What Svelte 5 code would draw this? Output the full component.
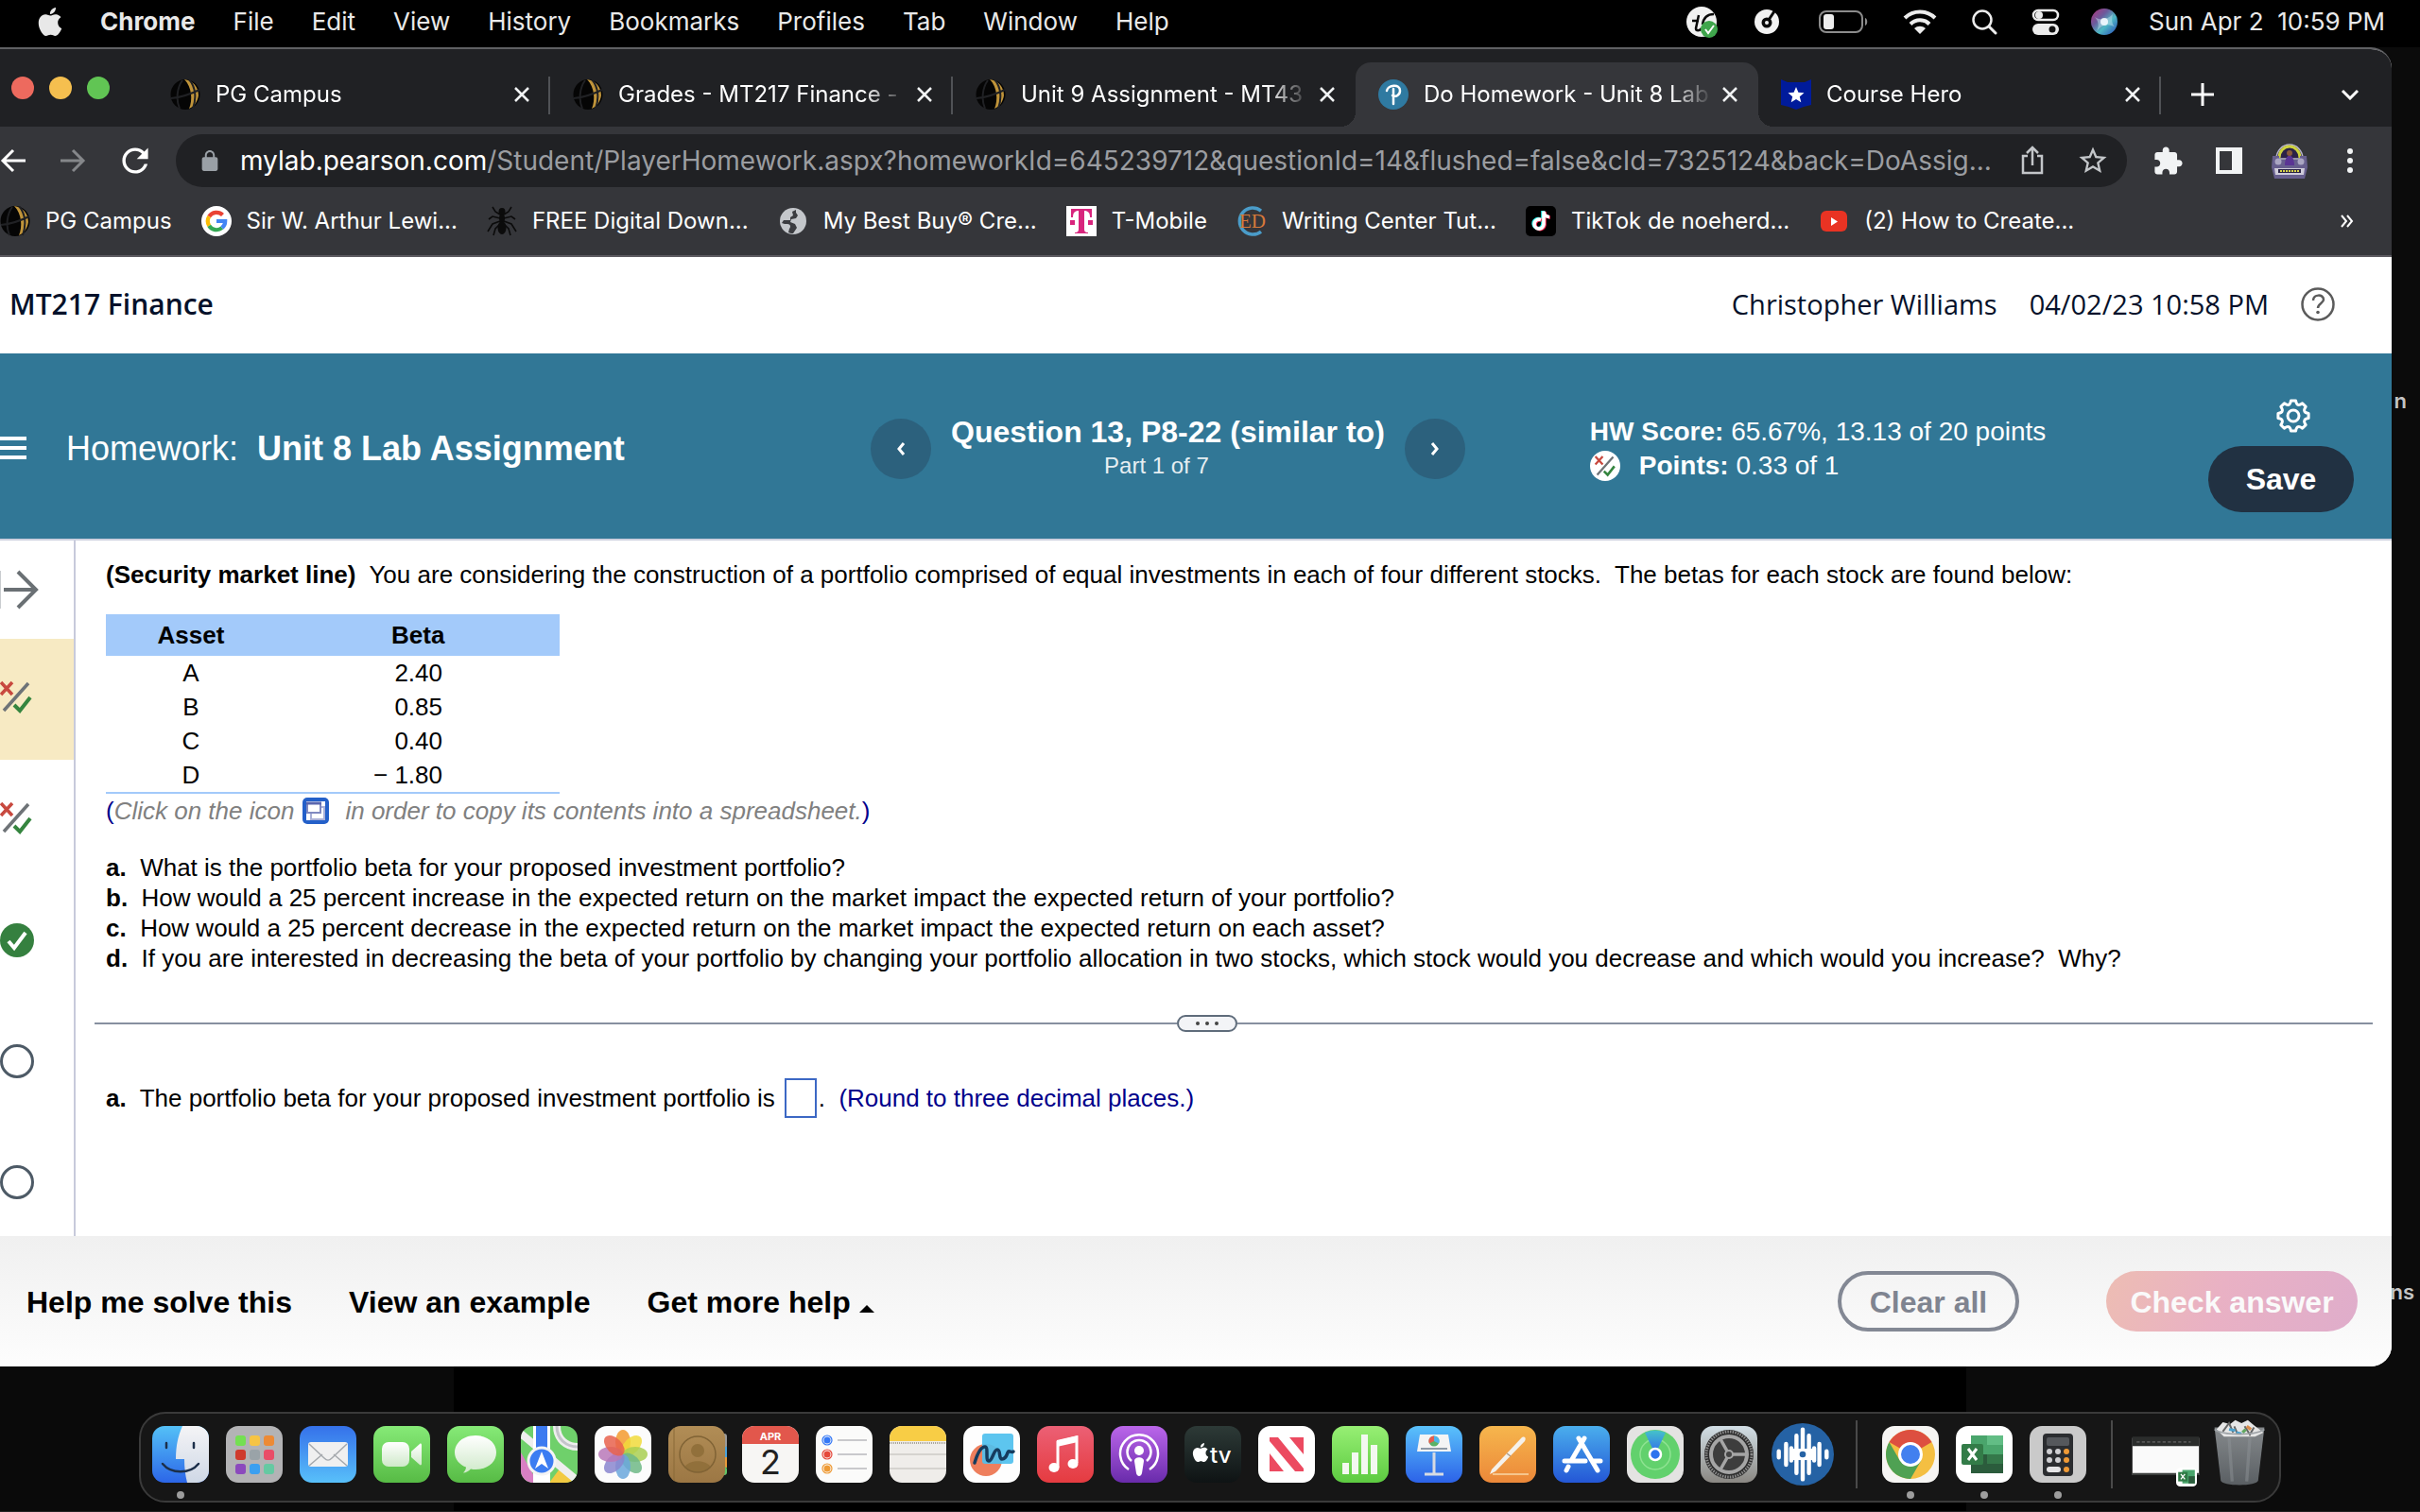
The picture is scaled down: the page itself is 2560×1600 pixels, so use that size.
<script lang="ts">
  const menus = ['File', 'Edit', 'View', 'History', 'Bookmarks', 'Profiles', 'Tab', 'Window', 'Help'];

  const tabs = [
    { icon: 'globe', title: 'PG Campus' },
    { icon: 'globe', title: 'Grades - MT217 Finance -' },
    { icon: 'globe', title: 'Unit 9 Assignment - MT43' },
    { icon: 'pearson', title: 'Do Homework - Unit 8 Lab', active: true },
    { icon: 'hero', title: 'Course Hero' },
  ];

  const bookmarks = [
    { icon: 'globe', title: 'PG Campus' },
    { icon: 'google', title: 'Sir W. Arthur Lewi...' },
    { icon: 'ant', title: 'FREE Digital Down...' },
    { icon: 'world', title: 'My Best Buy® Cre...' },
    { icon: 'tmobile', title: 'T-Mobile' },
    { icon: 'ed', title: 'Writing Center Tut...' },
    { icon: 'tiktok', title: 'TikTok de noeherd...' },
    { icon: 'youtube', title: '(2) How to Create...' },
  ];

  const assets = [
    { name: 'A', beta: '2.40' },
    { name: 'B', beta: '0.85' },
    { name: 'C', beta: '0.40' },
    { name: 'D', beta: '− 1.80' },
  ];

  const parts = [
    { key: 'a.', text: 'What is the portfolio beta for your proposed investment portfolio?' },
    { key: 'b.', text: 'How would a 25 percent increase in the expected return on the market impact the expected return of your portfolio?' },
    { key: 'c.', text: 'How would a 25 percent decrease in the expected return on the market impact the expected return on each asset?' },
    { key: 'd.', text: 'If you are interested in decreasing the beta of your portfolio by changing your portfolio allocation in two stocks, which stock would you decrease and which would you increase?\u00a0 Why?' },
  ];

  const steps = ['partial', 'partial', 'done', 'open', 'open'];

  const dock = [
    'finder', 'launchpad', 'mail', 'facetime', 'messages', 'maps', 'photos', 'contacts', 'calendar',
    'reminders', 'notes', 'freeform', 'music', 'podcasts', 'tv', 'news', 'numbers', 'keynote', 'pages',
    'appstore', 'findmy', 'settings', 'audio', '|', 'chrome', 'excel', 'calculator', '|', 'minimized', 'trash',
  ];
  const running = ['finder', 'chrome', 'excel', 'calculator'];

  const applePath =
    'M12.152 6.896c-.948 0-2.415-1.078-3.96-1.04-2.04.027-3.91 1.183-4.961 3.014-2.117 3.675-.546 9.103 1.519 12.09 1.013 1.454 2.208 3.09 3.792 3.039 1.52-.065 2.09-.987 3.935-.987 1.831 0 2.35.987 3.96.948 1.637-.026 2.676-1.48 3.676-2.948 1.156-1.688 1.636-3.325 1.662-3.415-.039-.013-3.182-1.221-3.22-4.857-.026-3.04 2.48-4.494 2.597-4.559-1.429-2.09-3.623-2.324-4.39-2.376-2-.156-3.675 1.09-4.61 1.09zM15.53 3.83c.843-1.012 1.4-2.427 1.245-3.83-1.207.052-2.662.805-3.532 1.818-.78.896-1.454 2.338-1.273 3.714 1.338.104 2.715-.688 3.559-1.701';

  const petals = ['#f39a2f', '#f1da3b', '#a9cf52', '#6fb886', '#6aa7dc', '#8a86cf', '#b878b8', '#e8614c'];

  // Outline of an eight-lobed cog around (18, 18).
  const cog = Array.from({ length: 8 }, (_, i) => {
    const at = (r: number, deg: number) => {
      const a = ((i * 45 + deg - 90) * Math.PI) / 180;
      return `${(18 + r * Math.cos(a)).toFixed(2)} ${(18 + r * Math.sin(a)).toFixed(2)}`;
    };
    return `${i ? 'L' : 'M'}${at(16.3, -9)}L${at(16.3, 9)}Q${at(12.6, 15)} ${at(12.8, 22.5)}Q${at(12.6, 30)} ${at(16.3, 36)}`;
  }).join('') + 'Z';

  let answer = $state('');
</script>

{#snippet siteIcon(name: string)}
  <svg class="site" viewBox="0 0 32 32" aria-hidden="true">
    {#if name === 'globe'}
      <ellipse cx="16" cy="16" rx="15.500" ry="16" fill="#050505" />
      <path d="M15 0C24 1 30 8 30 17c-1 7-5 12-10 14C24 22 23 8 15 0z" fill="#c0943a" />
      <path d="M1 20c9-1 20-4 30-9M20 0c7 8 8 20 4 31M13 1C7 9 6 22 10 31" fill="none" stroke="#202124" stroke-width="2" />
    {:else if name === 'pearson'}
      <circle cx="16" cy="16" r="16" fill="#2f7aa1" />
      <path d="M9 12c1-6 14-8 14 0 0 5-5 7-8 5M16 10v16" fill="none" stroke="#fff" stroke-width="2.500" stroke-linecap="round" />
    {:else if name === 'hero'}
      <path d="M0 0l7 3h18l7-3v27l-8 2-8 3-8-3-8-2z" fill="#001b9b" />
      <path d="M16 8l2.400 5.800 6.100.400-4.700 4 1.500 6-5.300-3.300-5.300 3.300 1.500-6-4.700-4 6.100-.400z" fill="#fff" />
    {:else if name === 'google'}
      <circle cx="16" cy="16" r="16" fill="#fff" />
      <g fill="none" stroke-width="4.200">
        <path d="M22.500 9.500A9.200 9.200 0 0 0 8.200 11.200" stroke="#ea4335" />
        <path d="M8.200 11.200a9.200 9.200 0 0 0 0 9.600" stroke="#fbbc05" />
        <path d="M8.200 20.800a9.200 9.200 0 0 0 13.600 2.400" stroke="#34a853" />
        <path d="M16 16h9.200a9.200 9.200 0 0 1-3.400 7.200" stroke="#4285f4" />
      </g>
    {:else if name === 'ant'}
      <g stroke="#0b0b0b" stroke-width="1.600" fill="none">
        <path d="M14 9L9 6 6 1M18 9l5-3 3-5M14 13L6 11 2 14M18 13l8-2 4 3M14 16l-8 3-5 8M18 16l8 3 5 8M14 19l-5 5-2 7M18 19l5 5 2 7" />
      </g>
      <ellipse cx="16" cy="6" rx="3.500" ry="4" fill="#0b0b0b" />
      <ellipse cx="16" cy="13" rx="3" ry="4.500" fill="#0b0b0b" />
      <ellipse cx="16" cy="23" rx="4.500" ry="7" fill="#0b0b0b" />
    {:else if name === 'world'}
      <circle cx="16" cy="16" r="14" fill="#c4c7cb" />
      <path d="M19 4l-4 2 1 4-3 2v3H6l-2 3c2 1 4 1 6 1 3 0 4 3 2 5l-1 4c2 1 4 1 5 1l4-6-2-4-5-2 1-3 5-1 2-3-2-3z" fill="#3b3c40" />
    {:else if name === 'tmobile'}
      <path d="M0 0h32v32H0z" fill="#fff" />
      <path d="M5 3h22v9h-2c0-5-2-7-6-7v19c0 3 1 4 4 4v1H9v-1c3 0 4-1 4-4V5c-4 0-6 2-6 7H5zM4 15h5v5H4zM23 15h5v5h-5z" fill="#d8257d" />
    {:else if name === 'ed'}
      <path d="M26 5A14 14 0 1 0 26 27" fill="none" stroke="#4a9cc9" stroke-width="3.500" />
      <text x="17" y="23" text-anchor="middle" class="ed">ED</text>
    {:else if name === 'tiktok'}
      <rect width="32" height="32" rx="5" fill="#000" />
      <g fill="none" stroke-width="3.600">
        <path d="M15 14a5 5 0 1 0 3 5V5c0 4 3 6 6 6" stroke="#25f4ee" />
        <path d="M17 15a5 5 0 1 0 3 5V6c0 4 3 6 6 6" stroke="#fe2c55" />
        <path d="M16 14.500a5 5 0 1 0 3 5V5.500c0 4 3 6 6 6" stroke="#fff" />
      </g>
    {:else if name === 'youtube'}
      <rect x="2" y="5" width="28" height="22" rx="6" fill="#e93323" />
      <path d="M13 12v9l7-4.500z" fill="#fff" />
    {/if}
  </svg>
{/snippet}

{#snippet partial()}
  <path d="M1 3l12 13M13 3L1 16" stroke="#c8493f" stroke-width="3.500" fill="none" />
  <path d="M4 33L30 4" stroke="#6e7377" stroke-width="3.500" fill="none" />
  <path d="M15 27l6 6L32 19" stroke="#35853f" stroke-width="4" fill="none" />
{/snippet}

{#snippet dockArt(name: string)}
  <svg class="art" class:large={name === 'audio' || name === 'trash' || name === 'minimized'} viewBox="0 0 60 60" aria-hidden="true">
    {#if name === 'finder'}
      <rect width="60" height="60" rx="13" fill="url(#g-finder)" />
      <path d="M32 0h15a13 13 0 0 1 13 13v34a13 13 0 0 1-13 13H37c-2-8-3-16-3-25h-9C25 22 27 11 32 0z" fill="url(#g-silver)" />
      <path d="M15 18v5M44 18v5M11 40c9 11 29 11 38 0" stroke="#1c2f4a" stroke-width="2.500" stroke-linecap="round" fill="none" />
    {:else if name === 'launchpad'}
      <rect width="60" height="60" rx="13" fill="#b3b3b5" />
      {#each ['#74e052', '#f6c444', '#ec8a36', '#cf3a2c', '#9aa3a8', '#e94d68', '#8b49bd', '#3b9ff0', '#65c9a2'] as c, i}
        <rect x={10 + (i % 3) * 15} y={10 + Math.floor(i / 3) * 15} width="11" height="11" rx="3" fill={c} />
      {/each}
    {:else if name === 'mail'}
      <rect width="60" height="60" rx="13" fill="url(#g-mail)" />
      <rect x="9" y="17" width="42" height="26" rx="3" fill="#f0f0f0" />
      <path d="M10 19l16 15c3 3 5 3 8 0l16-15M10 42l14-12M50 42L36 30" stroke="#a5a9ad" stroke-width="1.500" fill="none" />
    {:else if name === 'facetime'}
      <rect width="60" height="60" rx="13" fill="url(#g-green)" />
      <rect x="9" y="17" width="29" height="26" rx="7" fill="url(#g-pale)" />
      <path d="M40 27l9-8c1-1 2 0 2 1v20c0 1-1 2-2 1l-9-8z" fill="url(#g-pale)" />
    {:else if name === 'messages'}
      <rect width="60" height="60" rx="13" fill="url(#g-green)" />
      <path d="M30 10c13 0 22 8 22 18s-9 18-22 18c-2 0-3 0-5-.500-2 2-5 4-8 4 2-2 3-4 3-6C13 41 8 35 8 28c0-10 9-18 22-18z" fill="url(#g-pale)" />
    {:else if name === 'maps'}
      <clipPath id="c-maps"><rect width="60" height="60" rx="13" /></clipPath>
      <g clip-path="url(#c-maps)">
        <path d="M0 0h60v60H0z" fill="#6fd06b" />
        <path d="M0 28l18 32H0z" fill="#d97fc4" />
        <path d="M30 60l12-16 14 16z" fill="#f2ca42" />
        <path d="M0 8l60 50M38 0c0 14 10 22 22 22" stroke="#eee" stroke-width="8" fill="none" />
        <path d="M38 0c0 14 10 22 22 22" stroke="#c4c4cb" stroke-width="3" fill="none" />
        <path d="M22 0v60" stroke="#fff" stroke-width="18" />
        <path d="M22 0v30" stroke="#3c7af0" stroke-width="12" />
      </g>
      <circle cx="22" cy="37" r="14" fill="#3c7df2" stroke="#f4f4f4" stroke-width="3" />
      <path d="M22 27l7 18-7-5-7 5z" fill="#fff" />
    {:else if name === 'photos'}
      <rect width="60" height="60" rx="13" fill="#fcfcfc" />
      {#each petals as c, i}
        <ellipse cx="30" cy="17" rx="8" ry="13" fill={c} opacity="0.850" transform="rotate({i * 45} 30 30)" />
      {/each}
    {:else if name === 'contacts'}
      <rect x="50" y="8" width="12" height="16" rx="3" fill="#9a9a9a" />
      <rect x="50" y="22" width="12" height="12" fill="#4ba3dc" />
      <rect x="50" y="33" width="12" height="11" fill="#e99a3a" />
      <rect x="50" y="43" width="12" height="9" rx="3" fill="#62c568" />
      <rect width="60" height="60" rx="13" fill="url(#g-contacts)" />
      <g fill="#91703b"><circle cx="31" cy="26" r="7" /><path d="M17 44c4-9 24-9 28 0-7 7-21 7-28 0z" /></g>
      <circle cx="31" cy="30" r="19" fill="none" stroke="#806335" stroke-width="1.500" />
      <path d="M6 2v56" stroke="#8a6a38" />
    {:else if name === 'calendar'}
      <rect width="60" height="60" rx="13" fill="#f7f6f4" />
      <path d="M0 19v-6A13 13 0 0 1 13 0h34a13 13 0 0 1 13 13v6z" fill="#e2574c" />
      <text x="30" y="15" text-anchor="middle" class="cal-month">APR</text>
      <text x="30" y="51" text-anchor="middle" class="cal-day">2</text>
    {:else if name === 'reminders'}
      <rect width="60" height="60" rx="13" fill="#fbfbfa" />
      {#each ['#3478f6', '#e5483b', '#ee9a35'] as c, i}
        <circle cx="12" cy={15 + i * 15} r="5" fill="none" stroke={c} stroke-width="1.200" />
        <circle cx="12" cy={15 + i * 15} r="3.500" fill={c} />
        <path d="M23 {15 + i * 15}h31" stroke="#c9c9cc" stroke-width="2" />
      {/each}
    {:else if name === 'notes'}
      <rect width="60" height="60" rx="13" fill="#efedea" />
      <path d="M0 16v-3A13 13 0 0 1 13 0h34a13 13 0 0 1 13 13v3z" fill="#f8cd45" />
      <path d="M0 18h60" stroke="#a9a59c" stroke-width="2" stroke-dasharray="1 1" />
      <path d="M0 30h60M0 45h60" stroke="#d5d3cf" stroke-width="2" />
    {:else if name === 'freeform'}
      <rect width="60" height="60" rx="13" fill="#fefefe" />
      <circle cx="24" cy="36" r="17" fill="#ee7f5d" />
      <rect x="20" y="8" width="33" height="32" rx="3" fill="#4fc0ee" opacity="0.920" />
      <path d="M12 39c3-10 7-17 11-17s0 15 4 15 5-12 9-12 1 10 5 10 5-4 6-7 4 1 6-1" stroke="#153c5e" stroke-width="3.500" fill="none" stroke-linecap="round" />
    {:else if name === 'music'}
      <rect width="60" height="60" rx="13" fill="url(#g-music)" />
      <path d="M22 44V17l20-5v27" stroke="#fff" stroke-width="3" fill="none" />
      <path d="M21 15l22-5v7l-22 5z" fill="#fff" />
      <ellipse cx="18" cy="44" rx="5.500" ry="5" fill="#fff" /><ellipse cx="38" cy="40" rx="5.500" ry="5" fill="#fff" />
    {:else if name === 'podcasts'}
      <rect width="60" height="60" rx="13" fill="url(#g-podcasts)" />
      <g fill="none" stroke="#fff" stroke-width="2.500">
        <path d="M19 46a20 20 0 1 1 22 0M22 37a12.500 12.500 0 1 1 16 0" />
      </g>
      <circle cx="30" cy="26" r="5" fill="#fff" />
      <path d="M25 37c0-5 10-5 10 0l-2 13c-1 4-5 4-6 0z" fill="#fff" />
    {:else if name === 'tv'}
      <rect width="60" height="60" rx="13" fill="url(#g-tv)" />
      <svg x="7" y="17" width="20" height="22" viewBox="0 0 24 24"><path d={applePath} fill="#fff" /></svg>
      <text x="27" y="39" class="tv">tv</text>
    {:else if name === 'news'}
      <rect width="60" height="60" rx="13" fill="#fff" />
      <path d="M12 12h9l27 33v3h-9L12 16zM33 12h15v18zM12 29v19h15z" fill="#ec4a60" />
    {:else if name === 'numbers'}
      <rect width="60" height="60" rx="13" fill="url(#g-numbers)" />
      <path d="M11 39h7v12h-7zM21 28h7v23h-7zM31 9h7v42h-7zM41 20h7v31h-7z" fill="#f3f8f0" />
    {:else if name === 'keynote'}
      <rect width="60" height="60" rx="13" fill="url(#g-keynote)" />
      <path d="M15 9h30l3 18H12z" fill="#f4f4f4" />
      <path d="M16 24h28" stroke="#8e9aa6" stroke-width="2" />
      <path d="M30 28v22M20 51h20" stroke="#d7dbe2" stroke-width="3" />
      <circle cx="30" cy="16" r="5.500" fill="#59b267" /><path d="M30 16v-5.500a5.500 5.500 0 0 1 5 8z" fill="#4fb3ea" /><path d="M30 16v-5.500a5.500 5.500 0 0 0-5 8z" fill="#e65c4f" />
    {:else if name === 'pages'}
      <rect width="60" height="60" rx="13" fill="url(#g-pages)" />
      <path d="M13 46L44 13c3-3 6-1 4 3L17 48l-6 3z" fill="#f5f1ea" />
      <path d="M29 29l4 3" stroke="#a99c8a" stroke-width="1.500" /><path d="M14 51h38" stroke="#f6c58c" stroke-width="2" />
    {:else if name === 'appstore'}
      <rect width="60" height="60" rx="13" fill="url(#g-appstore)" />
      <path d="M33 13L19 37M27 13l20 34M12 37h22M43 37h7M16 43l-2 4" stroke="#fff" stroke-width="5" stroke-linecap="round" />
    {:else if name === 'findmy'}
      <rect width="60" height="60" rx="13" fill="#e4e3e2" />
      <circle cx="30" cy="30" r="26" fill="#62d16d" />
      <circle cx="30" cy="30" r="16" fill="none" stroke="#8fe392" stroke-width="1.500" />
      <path d="M30 30L19 7a26 26 0 0 1 22 0z" fill="url(#g-beam)" />
      <circle cx="30" cy="30" r="6" fill="#2d73ee" stroke="#fff" stroke-width="2.500" />
    {:else if name === 'settings'}
      <rect width="60" height="60" rx="13" fill="url(#g-settings)" />
      <circle cx="30" cy="30" r="26" fill="#2c2c2c" />
      <circle cx="30" cy="30" r="24" fill="none" stroke="#8b8b8b" stroke-width="3" stroke-dasharray="1.500 1.200" />
      <circle cx="30" cy="30" r="19" fill="#3d3d3d" stroke="#a5a5a5" stroke-width="4" />
      <path d="M30 30h18M30 30L21 14M30 30l-9 16" stroke="#a5a5a5" stroke-width="3.500" />
      <circle cx="30" cy="30" r="4" fill="#444" stroke="#a5a5a5" stroke-width="2" />
    {:else if name === 'audio'}
      <circle cx="30" cy="30" r="30" fill="#2562a4" />
      <path d="M7 27v6M14 20v20M19 24v12M24 12v36M30 6v48M36 12v36M41 24v12M46 20v20M53 27v6" stroke="#fff" stroke-width="4" stroke-linecap="round" />
      <path d="M19 30h22" stroke="#fff" stroke-width="11" />
      <circle cx="30" cy="30" r="3" fill="#2562a4" />
    {:else if name === 'chrome'}
      <rect width="60" height="60" rx="13" fill="#f6f5f3" />
      <circle cx="30" cy="30" r="26" fill="#f4bf42" />
      <path d="M30 30L7.500 17A26 26 0 0 1 52.500 17H30z" fill="#dd4f40" />
      <path d="M30 30L52.500 17H30z" fill="#dd4f40" />
      <path d="M41.300 36.500L30 56A26 26 0 0 1 7.500 17l11.200 19.500z" fill="#4fa153" />
      <circle cx="30" cy="30" r="13" fill="#fff" /><circle cx="30" cy="30" r="10" fill="#4280ef" />
    {:else if name === 'excel'}
      <rect width="60" height="60" rx="13" fill="#fff" />
      <path d="M16 10h17v20H16z" fill="#4aa56c" /><path d="M33 10h17v10H33z" fill="#62bd85" /><path d="M33 20h17v10H33z" fill="#4aa56c" />
      <path d="M33 30h17v10H33z" fill="#35784a" /><path d="M16 30h17v20H16z" fill="#2b5c3c" /><path d="M33 40h17v10H33z" fill="#2b5c3c" />
      <rect x="6" y="19" width="23" height="22" rx="2" fill="#337c48" />
      <path d="M13 24l9 12M22 24l-9 12" stroke="#fff" stroke-width="3" />
    {:else if name === 'calculator'}
      <rect width="60" height="60" rx="13" fill="#cacaca" />
      <rect x="14" y="8" width="32" height="45" rx="4" fill="#2b2d30" /><rect x="18" y="12" width="24" height="9" rx="2" fill="#55585c" />
      {#each [0, 1] as row}
        <circle cx="21" cy={27 + row * 9} r="3" fill="#cfcfd2" /><circle cx="30" cy={27 + row * 9} r="3" fill="#cfcfd2" />
      {/each}
      <rect x="18" y="43" width="15" height="6" rx="3" fill="#e4e4e6" />
      <circle cx="39" cy="27" r="3" fill="#f09a36" /><circle cx="39" cy="36" r="3" fill="#f09a36" /><circle cx="39" cy="46" r="3" fill="#f09a36" />
    {:else if name === 'minimized'}
      <path d="M-2 14h64v36H-2z" fill="#fafafa" /><path d="M-2 13h64v9H-2z" fill="#2b2d2c" /><path d="M-2 48h64v2H-2z" fill="#3c3e3d" />
      <path d="M2 18h52" stroke="#555" stroke-width="1.500" stroke-dasharray="3 2" />
      <rect x="40" y="43" width="20" height="18" rx="4" fill="#fff" />
      <path d="M46 45h12v13H46z" fill="#4aa56c" /><path d="M52 51h6v7h-6z" fill="#2b5c3c" /><rect x="42" y="47" width="9" height="9" fill="#2f7a45" />
      <path d="M44.500 49l4 5M48.500 49l-4 5" stroke="#fff" stroke-width="1.200" />
    {:else if name === 'trash'}
      <path d="M6 4h48l-6 51c-1 6-35 6-36 0z" fill="url(#g-trash)" />
      <path d="M20 14l3 42M40 14l-3 42" stroke="#8d9296" stroke-width="3" opacity="0.500" />
      <path d="M8 6l6-7 7 2 5-4 6 3 6-3 6 5 5 4 4 3-8 4H15z" fill="#e6e6e6" />
      <path d="M14 8l6-8 4 9M35 3l5 8 4-7M28 10l-3-7" stroke="#666" stroke-width="1.800" fill="none" />
      <path d="M20 6l6 1M27 9l5 1" stroke="#4aa3d0" stroke-width="2.500" /><path d="M37 3l4 3" stroke="#d98b4a" stroke-width="3" /><path d="M33 9l3-3" stroke="#62a860" stroke-width="3" />
      <path d="M6 6c8 6 40 6 48 0" stroke="#9da2a6" stroke-width="1.500" fill="none" />
    {/if}
  </svg>
{/snippet}

<svg class="defs" aria-hidden="true">
  <defs>
    {#each [['finder', '#54c1f7', '#2c66e8'], ['silver', '#f4f4f6', '#cfd8e6'], ['mail', '#3571ea', '#58c0fa'], ['green', '#86ea77', '#57bb45'], ['pale', '#ffffff', '#cfe9c9'], ['beam', '#45c3c9', '#2f66f0'], ['contacts', '#b18d56', '#9c7744'], ['music', '#ec6075', '#e53b40'], ['podcasts', '#bb66ea', '#692bab'], ['tv', '#2d3a37', '#0e1314'], ['numbers', '#97ef74', '#5dcb41'], ['keynote', '#5ac2fb', '#2c62e8'], ['pages', '#f6b64d', '#ec8839'], ['appstore', '#4aaeed', '#2457d6'], ['settings', '#d2dfe6', '#8a8782'], ['trash', '#85898c', '#5a5f63']] as [id, from, to]}
      <linearGradient id="g-{id}" x1="0" y1="0" x2="0" y2="1">
        <stop offset="0" stop-color={from} /><stop offset="1" stop-color={to} />
      </linearGradient>
    {/each}
    <linearGradient id="g-siri" x1="0" y1="0" x2="1" y2="1">
      <stop offset="0" stop-color="#b8337a" /><stop offset="0.350" stop-color="#6b5a9c" /><stop offset="0.600" stop-color="#4fb9c4" /><stop offset="1" stop-color="#2746b8" />
    </linearGradient>
  </defs>
</svg>

<div class="desktop">
  <span class="file-label upper">n</span>
  <span class="file-label lower">ns</span>

  <header class="menubar">
    <svg class="apple" viewBox="0 0 24 24" aria-label="Apple"><path d={applePath} fill="#e8e8e8" /></svg>
    <nav class="menus">
      <button class="app">Chrome</button>
      {#each menus as m}<button>{m}</button>{/each}
    </nav>
    <div class="status">
      <svg width="34" height="34" viewBox="0 0 34 34" aria-hidden="true">
        <circle cx="17" cy="17" r="16" fill="#f2f2f2" />
        <path d="M14 10l-3 14c0 3 4 3 6 0M7 16h7M30 9c-7 0-11 4-12 11" stroke="#0a0a0a" stroke-width="2.500" fill="none" />
        <circle cx="25" cy="25" r="9" fill="#3fa64c" /><path d="M21 25l3 4 6-8" stroke="#fff" stroke-width="2" fill="none" />
      </svg>
      <svg width="40" height="30" viewBox="0 0 40 30" aria-hidden="true">
        <circle cx="20" cy="15" r="13" fill="#f2f2f2" /><circle cx="20" cy="16" r="5.500" fill="#0a0a0a" /><path d="M22 13l6-9" stroke="#0a0a0a" stroke-width="3" /><circle cx="20" cy="16" r="2" fill="#f2f2f2" />
      </svg>
      <svg width="60" height="26" viewBox="0 0 60 26" aria-hidden="true">
        <rect x="4" y="2" width="45" height="22" rx="7" fill="none" stroke="#8c8c8c" stroke-width="2" />
        <rect x="8" y="5" width="11" height="16" rx="3" fill="#ededed" /><path d="M52 9v8c3-1 3-7 0-8z" fill="#8c8c8c" />
      </svg>
      <svg width="36" height="28" viewBox="0 0 36 28" aria-hidden="true">
        <g fill="none" stroke="#ececec" stroke-width="4"><path d="M2 10a23 23 0 0 1 32 0M8 16.500a14 14 0 0 1 20 0" /></g>
        <path d="M12 21a9 9 0 0 1 12 0l-6 6z" fill="#ececec" />
      </svg>
      <svg width="36" height="28" viewBox="0 0 36 28" aria-hidden="true">
        <circle cx="16" cy="12" r="9.500" fill="none" stroke="#ececec" stroke-width="2.500" /><path d="M23 19l7 7" stroke="#ececec" stroke-width="3" stroke-linecap="round" />
      </svg>
      <svg width="30" height="30" viewBox="0 0 30 30" aria-hidden="true">
        <rect x="2" y="3" width="26" height="10" rx="5" fill="none" stroke="#ececec" stroke-width="2.500" /><circle cx="8" cy="8" r="4" fill="#ececec" />
        <rect x="1" y="17" width="28" height="12" rx="6" fill="#ececec" /><circle cx="22" cy="23" r="3.500" fill="#111" />
      </svg>
      <svg width="30" height="30" viewBox="0 0 30 30" aria-hidden="true">
        <circle cx="15" cy="15" r="14" fill="url(#g-siri)" /><path d="M5 10c5 4 14 3 19-3-2 8 0 12 3 14-8-5-15-3-20 4 3-6 2-10-2-15z" fill="#cfe9f4" opacity="0.450" /><circle cx="15" cy="15" r="4" fill="#f3fbff" opacity="0.900" />
      </svg>
      <time>Sun Apr 2&nbsp; 10:59 PM</time>
    </div>
  </header>

  <main class="window">
    <div class="tabstrip">
      <div class="lights"><button class="red" aria-label="Close"></button><button class="yellow" aria-label="Minimize"></button><button class="green" aria-label="Zoom"></button></div>
      {#each tabs as t, i}
        <div class="tab" class:active={t.active} class:divided={!t.active && i !== 2}>
          {@render siteIcon(t.icon)}
          <span class="tab-title">{t.title}</span>
          <button class="close" aria-label="Close tab"><svg viewBox="0 0 20 20"><path d="M3 3l14 14M17 3L3 17" stroke="#f1f3f4" stroke-width="2.500" /></svg></button>
        </div>
      {/each}
      <button class="plus" aria-label="New tab"><svg viewBox="0 0 24 24"><path d="M12 0v24M0 12h24" stroke="#fff" stroke-width="3" /></svg></button>
      <button class="chev" aria-label="Search tabs"><svg viewBox="0 0 20 12"><path d="M2 2l8 8 8-8" fill="none" stroke="#fff" stroke-width="3" /></svg></button>
    </div>

    <div class="toolbar">
      <div class="history">
        <button aria-label="Back"><svg viewBox="0 0 28 28"><path d="M27 14H3M14 3L3 14l11 11" fill="none" stroke="#fff" stroke-width="3" /></svg></button>
        <button aria-label="Forward"><svg viewBox="0 0 28 28"><path d="M1 14h24M14 3l11 11-11 11" fill="none" stroke="#85878a" stroke-width="3" /></svg></button>
        <button aria-label="Reload"><svg class="reload" viewBox="2 2 20 20"><path d="M17.650 6.350C16.200 4.900 14.210 4 12 4c-4.420 0-7.990 3.580-7.990 8s3.570 8 7.990 8c3.730 0 6.840-2.550 7.730-6h-2.080c-.820 2.330-3.040 4-5.650 4-3.310 0-6-2.690-6-6s2.690-6 6-6c1.660 0 3.140.690 4.220 1.780L13 11h7V4l-2.350 2.350z" fill="#fff" /></svg></button>
      </div>
      <div class="omnibox">
        <svg class="lock" viewBox="3 0 18 23"><path d="M18 8h-1V6c0-2.760-2.240-5-5-5S7 3.240 7 6v2H6c-1.100 0-2 .900-2 2v10c0 1.100.900 2 2 2h12c1.100 0 2-.900 2-2V10c0-1.100-.900-2-2-2zM8.900 6c0-1.710 1.390-3.100 3.100-3.100s3.100 1.390 3.100 3.100v2H8.900z" fill="#9aa0a6" /></svg>
        <span class="url"><b>mylab.pearson.com</b>/Student/PlayerHomework.aspx?homeworkId=645239712&amp;questionId=14&amp;flushed=false&amp;cId=7325124&amp;back=DoAssig...</span>
        <button aria-label="Share"><svg viewBox="0 0 32 32"><path d="M11 11H6v18h20V11h-5M16 21V3M10 8l6-6 6 6" fill="none" stroke="#c3c6c9" stroke-width="2.500" /></svg></button>
        <button class="star" aria-label="Bookmark this page"><svg viewBox="1 1 22 22"><path d="M22 9.240l-7.190-.620L12 2 9.190 8.630 2 9.240l5.460 4.730L5.820 21 12 17.270 18.180 21l-1.630-7.030L22 9.240zM12 15.400l-3.760 2.270 1-4.280-3.320-2.880 4.380-.380L12 6.100l1.710 4.040 4.380.380-3.320 2.880 1 4.280L12 15.400z" fill="#c3c6c9" /></svg></button>
      </div>
      <div class="actions">
        <button aria-label="Extensions"><svg viewBox="1 0 23 23"><path d="M20.500 11H19V7c0-1.100-.900-2-2-2h-4V3.500C13 2.120 11.880 1 10.500 1S8 2.120 8 3.500V5H4c-1.100 0-1.990.900-1.990 2v3.800H3.500c1.490 0 2.700 1.210 2.700 2.700s-1.210 2.700-2.700 2.700H2V20c0 1.100.900 2 2 2h3.800v-1.500c0-1.490 1.210-2.700 2.700-2.700 1.490 0 2.700 1.210 2.700 2.700V22H17c1.100 0 2-.900 2-2v-4h1.500c1.380 0 2.500-1.120 2.500-2.500S21.880 11 20.500 11z" fill="#f1f3f4" /></svg></button>
        <button aria-label="Side panel"><svg viewBox="0 0 32 32"><path d="M2 2h28v28H2zM6 6v20h13V6z" fill="#f1f3f4" fill-rule="evenodd" /></svg></button>
        <button aria-label="Profile"><svg class="avatar" viewBox="0 0 40 40">
          <path d="M6 18a14 15 0 0 1 28 0z" fill="#2c2247" stroke="#b9b6cc" stroke-width="1.500" /><path d="M9 17a11 12 0 0 1 22 0" fill="none" stroke="#cdd23f" stroke-width="3" />
          <path d="M2 15h7v4h22v-4h7l1 12-3 12H4L1 27z" fill="#675f8e" /><circle cx="8" cy="21" r="3.500" fill="#aaa6c2" /><circle cx="32" cy="21" r="3.500" fill="#aaa6c2" />
          <path d="M15 25c0-14 10-14 10 0z" fill="#5a3494" /><circle cx="20" cy="12" r="3" fill="#8a5a3a" /><path d="M4 28h32l-1 7H5z" fill="#cfccd9" /><path d="M8 31h24" stroke="#2b2446" stroke-width="4" /><path d="M10 31h20" stroke="#d9d64a" stroke-width="2" stroke-dasharray="2 1" />
        </svg></button>
        <button aria-label="Menu"><svg viewBox="0 0 32 32"><g fill="#f1f3f4"><circle cx="16" cy="6" r="3" /><circle cx="16" cy="16" r="3" /><circle cx="16" cy="26" r="3" /></g></svg></button>
      </div>
    </div>

    <nav class="bookmarks">
      {#each bookmarks as b}
        <a href="#{b.icon}">{@render siteIcon(b.icon)}<span>{b.title}</span></a>
      {/each}
      <button class="more" aria-label="More bookmarks"><svg viewBox="0 0 14 14"><path d="M1 1l5 6-5 6M7 1l5 6-5 6" fill="none" stroke="#fff" stroke-width="2" /></svg></button>
    </nav>

    <div class="course">
      <h1>MT217 Finance</h1>
      <span class="student">Christopher Williams</span>
      <span>04/02/23 10:58 PM</span>
      <button class="help" aria-label="Help"><svg viewBox="0 0 36 36"><circle cx="18" cy="18" r="16.500" fill="none" stroke="#5b5b5b" stroke-width="2.500" /><path d="M13 14c0-7 11-7 11-1 0 4-6 4-6 9" fill="none" stroke="#5b5b5b" stroke-width="2.500" /><circle cx="18" cy="26.500" r="1.800" fill="#5b5b5b" /></svg></button>
    </div>

    <div class="banner">
      <div class="assignment">
        <button aria-label="Menu"><svg viewBox="0 0 28 28"><path d="M0 3h28M0 13h28M0 23h28" stroke="#fff" stroke-width="4" /></svg></button>
        <h2>Homework:&nbsp; <b>Unit 8 Lab Assignment</b></h2>
      </div>
      <div class="pager">
        <button class="round" aria-label="Previous question"><svg viewBox="0 0 10 16"><path d="M8 2L3 8l5 6" fill="none" stroke="#fff" stroke-width="3" /></svg></button>
        <div class="question"><strong>Question 13, P8-22 (similar to)</strong><span>Part 1 of 7</span></div>
        <button class="round" aria-label="Next question"><svg viewBox="0 0 10 16"><path d="M2 2l5 6-5 6" fill="none" stroke="#fff" stroke-width="3" /></svg></button>
      </div>
      <div class="score">
        <div><b>HW Score:</b> 65.67%, 13.13 of 20 points</div>
        <div class="points">
          <svg viewBox="0 0 32 32" aria-hidden="true"><circle cx="16" cy="16" r="16" fill="#fff" /><g transform="translate(5 4) scale(0.650)">{@render partial()}</g></svg>
          <span><b>Points:</b> 0.33 of 1</span>
        </div>
      </div>
      <div class="tools">
        <button class="gear" aria-label="Settings"><svg viewBox="0 0 36 36"><path d={cog} fill="none" stroke="#fff" stroke-width="3" stroke-linejoin="round" /><circle cx="18" cy="18" r="6" fill="none" stroke="#fff" stroke-width="3" /></svg></button>
        <button class="save">Save</button>
      </div>
    </div>

    <div class="player">
      <aside class="steps">
        <button class="expand" aria-label="Expand question list"><svg viewBox="0 0 42 42"><path d="M0 1v40" stroke="#c9cccf" stroke-width="2" /><path d="M4 21h34M19 2l19 19-19 19" fill="none" stroke="#6a7074" stroke-width="4" /></svg></button>
        {#each steps as s, i}
          <button class:current={i === 0} aria-label="Question part {i + 1}">
            <svg viewBox="0 0 36 40">
              {#if s === 'partial'}
                {@render partial()}
              {:else if s === 'done'}
                <circle cx="18" cy="20" r="18" fill="#35803f" /><path d="M9 21l6 7L27 12" fill="none" stroke="#fff" stroke-width="4" />
              {:else}
                <circle cx="18" cy="20" r="16.500" fill="#fff" stroke="#4d5a66" stroke-width="3" />
              {/if}
            </svg>
          </button>
        {/each}
      </aside>

      <section class="content">
        <div class="problem">
          <p><b>(Security market line)</b>&nbsp; You are considering the construction of a portfolio comprised of equal investments in each of four different stocks.&nbsp; The betas for each stock are found below:</p>
          <table>
            <thead><tr><th>Asset</th><th class="beta">Beta</th></tr></thead>
            <tbody>
              {#each assets as a}<tr><td>{a.name}</td><td class="beta"><span>{a.beta}</span></td></tr>{/each}
            </tbody>
          </table>
          <p class="hint">(<em>Click on the icon</em>
            <button aria-label="Copy to spreadsheet"><svg viewBox="0 0 28 28"><rect width="28" height="28" rx="5" fill="#2460c9" /><path d="M4 4h20v20H4z" fill="#fff" /><path d="M20 10h4M9 17v6h14V11" fill="none" stroke="#a9b0d8" stroke-width="2" /><path d="M5 6h14v10H5z" fill="#fff" stroke="#8089c0" stroke-width="2" /><path d="M4 6h16" stroke="#5a66ae" stroke-width="3" /></svg></button>
            <em>in order to copy its contents into a spreadsheet.</em>)</p>
          <ul>
            {#each parts as p}<li><b>{p.key}</b>&nbsp; {p.text}</li>{/each}
          </ul>
        </div>
        <div class="divider"><button aria-label="Resize panes"><i></i><i></i><i></i></button></div>
        <div class="answer">
          <label for="beta"><b>a.</b>&nbsp; The portfolio beta for your proposed investment portfolio is</label>
          <input id="beta" type="text" bind:value={answer} />
          <span>.&nbsp; <span class="note">(Round to three decimal places.)</span></span>
        </div>
      </section>
    </div>

    <footer>
      <button>Help me solve this</button>
      <button>View an example</button>
      <button>Get more help <svg viewBox="0 0 16 8"><path d="M0 8l8-8 8 8z" fill="#000" /></svg></button>
      <button class="clear">Clear all</button>
      <button class="check">Check answer</button>
    </footer>
  </main>

  <div class="dock-area">
    <nav class="dock">
      {#each dock as d}
        {#if d === '|'}
          <span class="sep"></span>
        {:else}
          <button aria-label={d} class:running={running.includes(d)}>{@render dockArt(d)}</button>
        {/if}
      {/each}
    </nav>
  </div>
</div>

<style>
  :global(body) { margin: 0; background: #000; }
  :global(*) { box-sizing: border-box; }
  button { appearance: none; border: 0; padding: 0; margin: 0; background: none; color: inherit; font: inherit; white-space: nowrap; cursor: pointer; }
  svg { display: block; }
  h1, h2, p, ul { margin: 0; padding: 0; font: inherit; }
  li { list-style: none; }
  .defs { position: absolute; width: 0; height: 0; }

  .desktop {
    position: relative; display: flex; flex-direction: column; min-height: 100vh; overflow: hidden;
    font-family: Inter, "Liberation Sans", sans-serif; color: #fff;
    background: linear-gradient(90deg, #0a0a0a 480px, #000 480px, #000 calc(100% - 480px), #0b0b0b calc(100% - 480px));
  }
  .file-label { position: absolute; right: 14px; font-size: 22px; line-height: 26px; font-weight: 600; color: #c4c4c4; }
  .upper { top: 411px; }
  .lower { top: 1354px; right: 6px; }

  .menubar { display: flex; align-items: center; height: 50px; padding: 0 37px 4px 38px; background: #000; font-size: 26px; line-height: 30px; color: #e9e9e9; }
  .apple { width: 30px; height: 32px; margin-right: 38px; }
  .menus { display: flex; gap: 40px; }
  .app { font-weight: 700; }
  .status { display: flex; align-items: center; gap: 32px; margin-left: auto; }

  .window {
    position: relative; display: flex; flex-direction: column; flex: 1; margin-right: 30px; overflow: hidden;
    border-top: 2px solid #5f6063; border-radius: 0 22px 22px 0; background: #fff;
  }
  .tabstrip { display: flex; height: 82px; padding-top: 14px; background: #202124; font-size: 24px; line-height: 30px; }
  .lights { display: flex; align-items: center; gap: 16px; width: 156px; flex: none; padding: 0 0 14px 12px; }
  .lights button { width: 24px; height: 24px; border-radius: 50%; }
  .red { background: #ed6a5e; }
  .yellow { background: #f5bf4f; }
  .green { background: #61c554; }
  .site { width: 32px; height: 32px; flex: none; }
  .tab { position: relative; display: flex; align-items: center; flex: 0 1 426px; min-width: 0; padding: 0 20px 0 24px; }
  .tab.active { background: #35363a; border-radius: 16px 16px 0 0; }
  .tab.active::before, .tab.active::after { content: ''; position: absolute; bottom: 0; width: 16px; height: 16px; }
  .tab.active::before { left: -16px; background: radial-gradient(circle at 0 0, transparent 16px, #35363a 16px); }
  .tab.active::after { right: -16px; background: radial-gradient(circle at 100% 0, transparent 16px, #35363a 16px); }
  .tab.divided::after { content: ''; position: absolute; right: 0; top: 15px; width: 2px; height: 40px; background: #505256; }
  .tab-title { flex: 1; min-width: 0; margin: 0 8px 0 16px; overflow: hidden; white-space: pre; -webkit-mask-image: linear-gradient(90deg, #000 85%, transparent); mask-image: linear-gradient(90deg, #000 85%, transparent); }
  .close svg { width: 20px; height: 20px; }
  .plus { margin-left: 32px; }
  .plus svg { width: 24px; height: 24px; }
  .chev { margin-left: auto; margin-right: 34px; }
  .chev svg { width: 20px; height: 12px; }

  .toolbar { display: flex; align-items: center; height: 72px; background: #35363a; }
  .history { display: flex; gap: 35px; width: 186px; flex: none; }
  .history svg { width: 28px; height: 28px; }
  .history .reload { width: 34px; height: 34px; }
  .history button { display: flex; align-items: center; }
  .omnibox { display: flex; align-items: center; flex: 1; min-width: 0; height: 56px; padding: 0 20px 0 26px; border-radius: 28px; background: #202124; font-size: 28px; line-height: 36px; color: #9b9da1; }
  .lock { width: 20px; height: 24px; margin-right: 22px; flex: none; }
  .url { flex: 1; min-width: 0; overflow: hidden; white-space: nowrap; }
  .url b { font-weight: 400; color: #fff; }
  .omnibox button { margin-left: 16px; }
  .omnibox .star { margin-left: 32px; }
  .omnibox button svg { width: 32px; height: 32px; }
  .actions { display: flex; gap: 32px; padding: 0 28px; }
  .actions button { width: 32px; height: 32px; display: grid; place-content: center; }
  .actions svg { width: 32px; height: 32px; }
  .actions .avatar { width: 40px; height: 40px; }

  .bookmarks { display: flex; align-items: center; gap: 31px; height: 66px; padding: 0 40px 9px 0; background: #35363a; border-bottom: 2px solid #5c5a60; font-size: 24px; line-height: 30px; white-space: nowrap; }
  .bookmarks a { display: flex; align-items: center; gap: 16px; color: #fff; text-decoration: none; }
  .more { margin-left: auto; }
  .more svg { width: 14px; height: 14px; }
  .ed { font: 400 21px "Liberation Serif", serif; fill: #d8793a; }

  .course { display: flex; align-items: center; height: 102px; padding: 0 60px 2px 10px; font-family: "Open Sans", "Noto Sans", sans-serif; font-size: 29px; line-height: 40px; color: #05112a; }
  .course h1 { font-size: 30px; font-weight: 600; margin-right: auto; }
  .student { margin-right: 34px; }
  .help { margin-left: 34px; }
  .help svg { width: 36px; height: 36px; }

  .banner { display: flex; align-items: center; height: 198px; padding: 6px 40px 0 0; background: #317796; border-bottom: 2px solid #cdd0de; font-family: "Liberation Sans", Arial, sans-serif; }
  .assignment { display: flex; align-items: center; gap: 42px; flex: 0 0 921px; }
  .assignment svg { width: 28px; height: 28px; }
  h2 { font-size: 36px; line-height: 40px; }
  .pager { display: flex; align-items: center; gap: 21px; }
  .round { display: grid; place-items: center; width: 64px; height: 64px; border-radius: 50%; background: #2c617d; }
  .round svg { width: 10px; height: 16px; }
  .question { display: flex; flex-direction: column; align-items: center; font-size: 24px; line-height: 36px; }
  .question strong { font-size: 32px; }
  .question span { padding-right: 24px; color: #e6eef2; }
  .score { margin-left: 132px; font-size: 28px; line-height: 36px; }
  .points { display: flex; align-items: center; gap: 20px; }
  .points svg { width: 32px; height: 32px; }
  .tools { display: flex; flex-direction: column; align-items: flex-end; gap: 14px; margin-left: auto; padding-top: 14px; }
  .gear { margin-right: 46px; }
  .gear svg { width: 36px; height: 36px; }
  .save { width: 154px; height: 70px; border-radius: 35px; background: #213142; font-size: 32px; font-weight: 700; }

  .player { display: flex; flex: 1 0 0; min-height: 600px; overflow: hidden; font-family: "Liberation Sans", Arial, sans-serif; color: #000; }
  .steps { flex: none; width: 80px; border-right: 2px solid #c7cadb; max-height: 100%; overflow: hidden; }
  .steps button { display: flex; align-items: center; width: 100%; height: 128px; padding-bottom: 2px; }
  .steps .expand { height: 104px; padding: 0; }
  .steps .current { background: #f7eac3; }
  .steps svg { width: 36px; height: 40px; }
  .steps .expand svg { width: 42px; height: 42px; }
  .content { flex: 1; min-width: 0; padding-top: 20px; font-size: 26px; line-height: 32px; }
  .problem { padding: 0 32px; }
  table { margin-top: 26px; border-collapse: collapse; width: 480px; border-bottom: 2px solid #a3cafa; }
  thead { background: #a3cafa; }
  th { height: 44px; padding: 0; }
  td { height: 36px; padding: 0; line-height: 36px; text-align: center; }
  th:first-child, td:first-child { width: 180px; }
  th.beta { text-align: left; padding-left: 122px; }
  td.beta { text-align: right; padding-right: 124px; }
  .hint { display: flex; align-items: center; margin-top: 2px; color: #00008b; }
  .hint em { color: #808080; }
  .hint button { margin: 0 17px 0 9px; }
  .hint svg { width: 28px; height: 28px; }
  ul { margin-top: 28px; }
  .divider { display: flex; align-items: center; margin: 44px 20px 49px; }
  .divider::before, .divider::after { content: ''; height: 2px; background: #8790a0; }
  .divider::before { flex: 0 0 1145px; }
  .divider::after { flex: 1; }
  .divider button { display: flex; align-items: center; justify-content: center; gap: 6px; width: 64px; height: 18px; border: 2px solid #5f6c7b; border-radius: 9px; background: #f3f4f7; }
  .divider i { width: 4px; height: 4px; border-radius: 50%; background: #444; }
  .answer { display: flex; align-items: center; padding: 0 32px; }
  .answer input { width: 34px; height: 42px; margin: 0 2px 0 10px; padding: 0 4px; border: 2px solid #3c68c4; font: inherit; background: #fff; }
  .note { color: #00008b; }

  footer { display: flex; align-items: center; gap: 60px; height: 138px; padding: 0 36px 0 28px; background: linear-gradient(#f0f0f0, #fdfdfd); font-family: "Liberation Sans", Arial, sans-serif; font-size: 32px; line-height: 40px; font-weight: 700; color: #000; }
  footer button { padding-top: 2px; }
  footer svg { display: inline-block; width: 16px; height: 8px; }
  .clear { margin-left: auto; width: 192px; height: 64px; border: 4px solid #838894; border-radius: 32px; color: #7f8490; }
  .check { margin-left: 32px; width: 266px; height: 64px; border-radius: 32px; background: linear-gradient(110deg, #edbdb3, #e9b1c4 45%, #dfadcb); color: #fafafa; }

  .dock-area { display: flex; justify-content: center; align-items: flex-start; height: 154px; padding-top: 48px; border-bottom: 1px solid #222; }
  .dock { display: flex; align-items: center; gap: 18px; height: 96px; padding: 0 12px 6px; border: 2px solid #3a3a3a; border-radius: 28px; background: #161616; }
  .dock button { position: relative; width: 60px; height: 60px; display: grid; place-content: center; }
  .art { width: 60px; height: 60px; overflow: visible; }
  .art.large { width: 66px; height: 66px; }
  .running::after { content: ''; position: absolute; left: 26px; bottom: -17px; width: 8px; height: 8px; border-radius: 50%; background: #9d9d9d; }
  .sep { width: 18px; height: 72px; background: linear-gradient(90deg, transparent 8px, #4a4a4a 8px, #4a4a4a 10px, transparent 10px); }
  .cal-month { font: 700 11px Inter, sans-serif; fill: #fff; }
  .cal-day { font: 400 36px Inter, sans-serif; fill: #222; }
  .tv { font: 500 24px Inter, sans-serif; fill: #fff; }
</style>
